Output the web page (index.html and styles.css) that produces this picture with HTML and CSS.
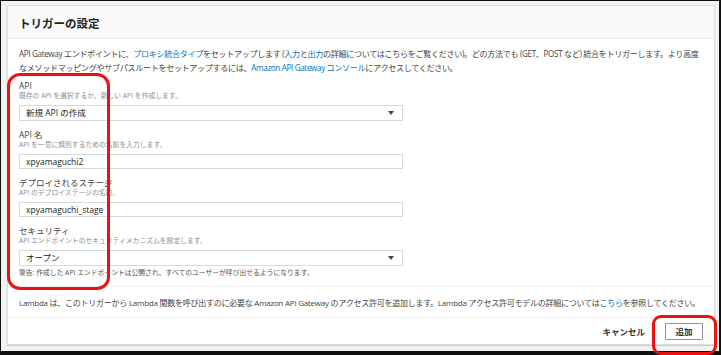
FILE: index.html
```html
<!DOCTYPE html>
<html lang="ja">

<head>
    <meta charset="UTF-8">
    <meta name="viewport" content="width=device-width, initial-scale=1.0">
    <title>トリガーの設定</title>
    <link rel="stylesheet" href="styles.css">
</head>

<body>
    <div class="frame">
        <div class="card">
            <div class="card-header">トリガーの設定</div>

            <div class="card-body">
                <p class="intro">API Gateway エンドポイントに、<a href="#">プロキシ統合タイプ</a>をセットアップします (<a href="#">入力</a>と<a href="#">出力</a>の詳細についてはこちらをご覧ください)。どの方法でも (GET、POST など) 統合をトリガーします。より高度<br>なメソッドマッピングやサブパスルートをセットアップするには、<a href="#">Amazon API Gateway コンソール</a>にアクセスしてください。</p>

                <div class="field">
                    <div class="label">API</div>
                    <div class="hint">既存の API を選択するか、新しい API を作成します。</div>
                    <div class="select">新規 API の作成<span class="caret"></span></div>
                </div>

                <div class="field">
                    <div class="label">API 名</div>
                    <div class="hint">API を一意に識別するための名前を入力します。</div>
                    <div class="input">xpyamaguchi2</div>
                </div>

                <div class="field">
                    <div class="label">デプロイされるステージ</div>
                    <div class="hint">API のデプロイステージの名前。</div>
                    <div class="input">xpyamaguchi_stage</div>
                </div>

                <div class="field">
                    <div class="label">セキュリティ</div>
                    <div class="hint">API エンドポイントのセキュリティメカニズムを設定します。</div>
                    <div class="select">オープン<span class="caret"></span></div>
                    <div class="warning">警告: 作成した API エンドポイントは公開され、すべてのユーザーが呼び出せるようになります。</div>
                </div>
            </div>

            <div class="permission">Lambda は、このトリガーから Lambda 関数を呼び出すのに必要な Amazon API Gateway のアクセス許可を追加します。Lambda アクセス許可モデルの詳細については<a href="#">こちら</a>を参照してください。</div>

            <div class="card-footer">
                <span class="cancel">キャンセル</span>
                <button class="add-button">追加</button>
            </div>
        </div>

        <!-- 注釈の赤枠 -->
        <div class="mark mark-fields"></div>
        <div class="mark mark-add"></div>
    </div>
</body>

</html>
```

FILE: styles.css
```css
body {
    margin: 0;
    font-family: 'Open Sans', 'Noto Sans CJK JP', sans-serif;
    color: #333;
}

.frame {
    position: relative;
    width: 721px;
    height: 355px;
    box-sizing: border-box;
    background-color: #f2f3f3;
    border-style: solid;
    border-color: #111;
    border-width: 1px 2px 4px 1px;
    padding: 4px 4px 0 6px;
}

.card {
    background-color: #ffffff;
    border: 1px solid #dcdfe0;
    box-shadow: 0 1px 1px rgba(0, 0, 0, 0.15);
}

.card-header {
    height: 32px;
    line-height: 35px;
    padding-left: 11px;
    background-color: #fafafa;
    border-bottom: 1px solid #e6e8e8;
    font-size: 11.5px;
    font-weight: bold;
    color: #222;
}

.card-body {
    padding: 8px 11px 0;
}

.intro {
    margin: 0;
    font-size: 8.1px;
    letter-spacing: -0.35px;
    line-height: 14px;
    white-space: nowrap;
    color: #444;
}

a {
    color: #0073bb;
    text-decoration: none;
}

.field {
    margin-top: 5px;
}

.field + .field {
    margin-top: 8px;
}

.label {
    font-size: 8.5px;
    line-height: 11px;
    color: #444;
}

.hint {
    font-size: 6.8px;
    line-height: 9px;
    color: #8a8f94;
}

.select,
.input {
    position: relative;
    width: 384px;
    height: 15px;
    margin-top: 5px;
    box-sizing: border-box;
    border: 1px solid #d5dbdb;
    padding-left: 6px;
    font-size: 8.5px;
    line-height: 13px;
    color: #222;
}

.select {
    height: 16px;
    line-height: 14px;
}

.caret {
    position: absolute;
    right: 8px;
    top: 5px;
    border-left: 3px solid transparent;
    border-right: 3px solid transparent;
    border-top: 4px solid #444;
}

.warning {
    font-size: 6.8px;
    line-height: 9px;
    margin-top: 2px;
    color: #555;
}

.permission {
    margin: 9px 0 0;
    padding: 0 11px;
    border-top: 1px solid #eef0f0;
    border-bottom: 1px solid #eef0f0;
    height: 30px;
    line-height: 31px;
    font-size: 8px;
    letter-spacing: -0.25px;
    white-space: nowrap;
    color: #444;
}

.card-footer {
    display: flex;
    justify-content: flex-end;
    align-items: center;
    height: 26px;
    padding-right: 11px;
}

.cancel {
    font-size: 8.5px;
    font-weight: 600;
    color: #333;
    margin-right: 20px;
}

.add-button {
    width: 38px;
    height: 17px;
    padding: 0;
    background-color: #ffffff;
    border: 1px solid #8d9396;
    border-radius: 1px;
    font-family: 'Noto Sans CJK JP', sans-serif;
    font-size: 8.5px;
    font-weight: 600;
    color: #333;
}

.mark {
    position: absolute;
    box-sizing: border-box;
    border: 3px solid #ee1111;
}

.mark-fields {
    left: 6px;
    top: 72px;
    width: 103px;
    height: 217px;
    border-radius: 13px;
}

.mark-add {
    left: 651px;
    top: 314px;
    width: 65px;
    height: 40px;
    border-radius: 9px;
}
```
